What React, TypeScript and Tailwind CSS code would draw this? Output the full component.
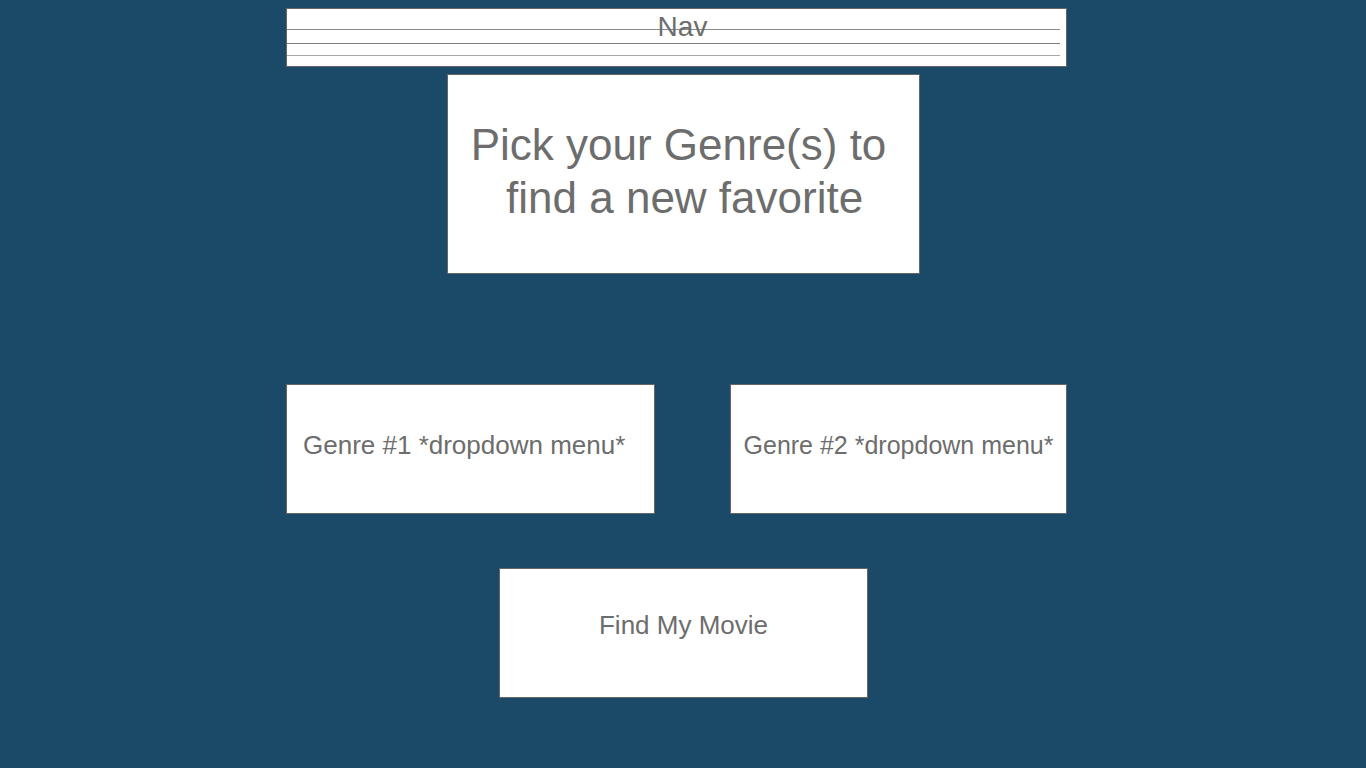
export default function App() {
  const font = { fontFamily: '"Liberation Sans", Arial, sans-serif' };
  return (
    <div className="min-h-screen w-full bg-[#1b4a68] pt-[8px]" style={font}>
      <div className="ml-[286px] w-[781px] flex flex-col">
        {/* Nav */}
        <div className="relative h-[59px] bg-white border border-[#666]">
          <svg className="absolute inset-0 w-full h-full" viewBox="0 0 779 57" preserveAspectRatio="none">
            <line x1="0" y1="20.5" x2="773" y2="20.5" stroke="#8c8c8c" strokeWidth="1" />
            <line x1="0" y1="34.5" x2="773" y2="34.5" stroke="#7e7e7e" strokeWidth="1" />
            <line x1="0" y1="46.5" x2="773" y2="46.5" stroke="#a8a8a8" strokeWidth="1" />
          </svg>
          <div className="relative pt-[2px] pl-[12px] text-center text-[28px] leading-[32px] text-[#6d6d6d]">Nav</div>
        </div>

        {/* Heading */}
        <div className="mt-[7px] ml-[161px] w-[473px] h-[200px] bg-white border border-[#666] flex flex-col items-center pt-[43px] pr-[10px] text-[44px] leading-[53px] text-[#6d6d6d]">
          <span>Pick your Genre(s) to</span>
          <span className="whitespace-pre"> find a new favorite</span>
        </div>

        {/* Genre selectors */}
        <div className="mt-[110px] flex gap-[75px]">
          <div className="w-[369px] h-[130px] bg-white border border-[#666] pt-[45px] pl-[16px] text-[26px] leading-[30px] text-[#6d6d6d]">
            Genre #1 *dropdown menu*
          </div>
          <div className="w-[337px] h-[130px] bg-white border border-[#666] pt-[46px] text-center text-[25px] leading-[29px] text-[#6d6d6d]">
            Genre #2 *dropdown menu*
          </div>
        </div>

        {/* Button */}
        <div className="mt-[54px] ml-[213px] w-[369px] h-[130px] bg-white border border-[#666] pt-[41px] text-center text-[26px] leading-[30px] text-[#6d6d6d]">
          Find My Movie
        </div>
      </div>
    </div>
  );
}
